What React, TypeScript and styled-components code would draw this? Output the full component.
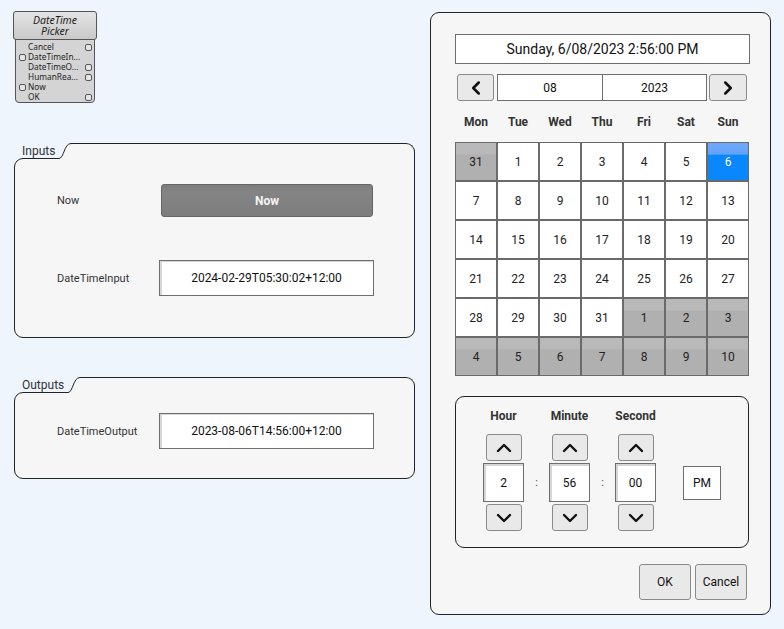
import React from "react";
import styled, { createGlobalStyle } from "styled-components";
import { ChevronLeft, ChevronRight, ChevronUp, ChevronDown } from "lucide-react";

const GlobalStyle = createGlobalStyle`
  html, body { margin: 0; padding: 0; background: #eef5fd; }
  body { font-family: Roboto, "Liberation Sans", sans-serif; }
  * { box-sizing: border-box; }
`;

const Page = styled.div`
  display: flex;
  align-items: flex-start;
  width: 784px;
  height: 629px;
  background: #eef5fd;
  overflow: hidden;
`;

const LeftCol = styled.div`
  width: 430px;
  display: flex;
  flex-direction: column;
  padding-top: 11px;
`;

/* ---------- node widget ---------- */
const Node = styled.div`
  margin-left: 13px;
  width: 84px;
  display: flex;
  flex-direction: column;
  font-family: "Noto Sans", "DejaVu Sans", sans-serif;
  color: #1e1e1e;
`;

const NodeHeader = styled.div`
  height: 29px;
  border: 1px solid #555;
  border-radius: 3px;
  background: linear-gradient(#e4e4e4, #c9c9c9);
  display: flex;
  justify-content: center;
  align-items: center;
  position: relative;
  z-index: 1;
`;

const NodeTitle = styled.span`
  width: 56px;
  text-align: center;
  font-style: italic;
  font-size: 10.5px;
  line-height: 11px;
`;

const NodeBody = styled.div`
  margin: -1px 2px 0 2px;
  border: 1px solid #555;
  border-radius: 0 0 4px 4px;
  background: #d4d4d4;
  padding: 2px 0 0 0;
`;

const PortRow = styled.div`
  display: grid;
  grid-template-columns: 12px 1fr 9px;
  align-items: center;
  height: 10px;
  font-size: 8.3px;
  line-height: 10px;
  white-space: nowrap;
`;

const Port = styled.span<{ $side: "l" | "r" }>`
  display: block;
  width: 7px;
  height: 7px;
  border: 1px solid #555;
  border-radius: 2px;
  background: #e6e6e6;
  margin-left: ${(p) => (p.$side === "l" ? "3px" : "0")};
`;

/* ---------- tabbed panels ---------- */
const PanelWrap = styled.div<{ $top: number }>`
  margin-left: 14px;
  margin-top: ${(p) => p.$top}px;
  width: 401px;
  display: flex;
  flex-direction: column;
`;

const TabRow = styled.div`
  display: flex;
  height: 15px;
  align-items: stretch;
`;

const TabLabel = styled.span`
  flex: none;
  padding: 0 4px 0 8px;
  font-size: 12px;
  line-height: 16px;
  color: #333;
`;

const TabCurve = styled.svg`
  flex: none;
  width: 12px;
  height: 16px;
  position: relative;
  z-index: 1;
`;

const TabFill = styled.div`
  flex: 1;
  height: 16px;
  background: #f6f6f6;
  border-top: 1px solid #222;
  border-right: 1px solid #222;
  border-top-right-radius: 9px;
  position: relative;
  z-index: 1;
`;

const PanelBody = styled.div<{ $h: number; $pt: number }>`
  height: ${(p) => p.$h}px;
  background: #f6f6f6;
  border: 1px solid #222;
  border-radius: 9px 0 9px 9px;
  padding-top: ${(p) => p.$pt}px;
  display: flex;
  flex-direction: column;
  gap: 43px;
`;

const FieldRow = styled.div`
  display: flex;
  align-items: center;
`;

const FieldLabel = styled.span`
  width: 144px;
  padding-left: 42px;
  font-size: 11px;
  color: #333;
`;

const NowButton = styled.div`
  margin-left: 2px;
  width: 212px;
  height: 33px;
  border: 1px solid #666;
  border-radius: 3px;
  background: linear-gradient(#7c7c7c 0%, #848484 20%, #7d7d7d 100%);
  color: #f4f4f4;
  font-weight: bold;
  font-size: 12px;
  display: flex;
  align-items: center;
  justify-content: center;
`;

const TextBox = styled.div<{ $w: number; $h: number; $fs?: number }>`
  width: ${(p) => p.$w}px;
  height: ${(p) => p.$h}px;
  background: #fff;
  border: 1px solid #6e6e6e;
  box-shadow: inset 2px 1px 0 #d6d6d6;
  font-size: ${(p) => p.$fs ?? 12}px;
  color: #111;
  display: flex;
  align-items: center;
  justify-content: center;
`;

/* ---------- calendar ---------- */
const RightPanel = styled.div`
  margin-top: 12px;
  width: 341px;
  height: 603px;
  border: 1px solid #222;
  border-radius: 9px;
  background: #f6f6f6;
  padding: 21px 0 0 24px;
  display: flex;
  flex-direction: column;
`;

const DateDisplay = styled.div`
  width: 295px;
  height: 30px;
  background: #fff;
  border: 1px solid #6e6e6e;
  font-size: 14px;
  color: #111;
  display: flex;
  align-items: center;
  justify-content: center;
`;

const NavRow = styled.div`
  margin: 10px 0 0 2px;
  display: flex;
  height: 27px;
`;

const GrayButton = styled.div<{ $w: number; $h: number }>`
  width: ${(p) => p.$w}px;
  height: ${(p) => p.$h}px;
  background: #e9e9e9;
  border: 1px solid #8a8a8a;
  border-radius: 3px;
  color: #111;
  font-size: 12px;
  display: flex;
  align-items: center;
  justify-content: center;
`;

const NavBox = styled.div<{ $w: number; $ml: number }>`
  width: ${(p) => p.$w}px;
  margin-left: ${(p) => p.$ml}px;
  background: #fff;
  border: 1px solid #6e6e6e;
  font-size: 12px;
  color: #111;
  display: flex;
  align-items: center;
  justify-content: center;
`;

const DayHeaders = styled.div`
  margin-top: 14px;
  display: grid;
  grid-template-columns: repeat(7, 42px);
  height: 14px;
  font-size: 12px;
  font-weight: bold;
  color: #333;
  text-align: center;
  line-height: 14px;
`;

const DayGrid = styled.div`
  margin-top: 13px;
  width: 294px;
  display: grid;
  grid-template-columns: repeat(7, 40px);
  grid-auto-rows: 37px;
  gap: 2px;
  padding: 1px;
  background: #6a6a6a;
`;

type Kind = "cur" | "other" | "sel";

const DayCell = styled.div<{ $kind: Kind }>`
  display: flex;
  align-items: center;
  justify-content: center;
  font-size: 12px;
  color: ${(p) => (p.$kind === "sel" ? "#fff" : "#222")};
  background: ${(p) =>
    p.$kind === "cur"
      ? "#fff"
      : p.$kind === "other"
      ? "linear-gradient(#b9b9b9 0%, #b9b9b9 28%, #b0b0b0 34%, #b0b0b0 100%)"
      : "linear-gradient(#6fa8fb 0%, #64a2fc 30%, #0a87fd 33%, #0a87fd 100%)"};
`;

const TimePanel = styled.div`
  margin-top: 20px;
  width: 294px;
  height: 152px;
  border: 1px solid #222;
  border-radius: 9px;
  padding: 12px 0 0 27px;
`;

const TimeGrid = styled.div`
  display: grid;
  grid-template-columns: 41px 25px 41px 25px 41px 27px 38px;
  grid-template-rows: 23px 27px 39px 27px;
  row-gap: 2px;
  justify-items: center;
`;

const TimeHead = styled.div<{ $col: number }>`
  grid-column: ${(p) => p.$col};
  grid-row: 1;
  align-self: start;
  white-space: nowrap;
  font-size: 12px;
  font-weight: bold;
  color: #333;
  line-height: 14px;
`;

const Spin = styled(GrayButton)<{ $col: number; $row: number }>`
  grid-column: ${(p) => p.$col};
  grid-row: ${(p) => p.$row};
`;

const TimeValue = styled(TextBox)<{ $col: number }>`
  grid-column: ${(p) => p.$col};
  grid-row: 3;
  box-shadow: inset 2px 2px 0 #d6d6d6;
`;

const Colon = styled.div<{ $col: number }>`
  grid-column: ${(p) => p.$col};
  grid-row: 3;
  align-self: center;
  font-size: 11px;
  color: #444;
`;

const AmPm = styled.div`
  grid-column: 7;
  grid-row: 3;
  align-self: center;
  width: 38px;
  height: 34px;
  background: #fff;
  border: 1px solid #6e6e6e;
  font-size: 12px;
  color: #111;
  display: flex;
  align-items: center;
  justify-content: center;
`;

const ActionRow = styled.div`
  margin-top: 16px;
  width: 294px;
  padding-right: 2px;
  display: flex;
  justify-content: flex-end;
  gap: 4px;
`;

const Panel: React.FC<{
  title: string;
  top: number;
  h: number;
  pt: number;
  children: React.ReactNode;
}> = ({ title, top, h, pt, children }) => (
  <PanelWrap $top={top}>
    <TabRow>
      <TabLabel>{title}</TabLabel>
      <TabCurve viewBox="0 0 12 16">
        <path d="M0 16 L0 15.5 C5 15.5 5 0.5 12 0.5 L12 16 Z" fill="#f6f6f6" />
        <path d="M0 15.5 C5 15.5 5 0.5 12 0.5" fill="none" stroke="#222" strokeWidth="1" />
      </TabCurve>
      <TabFill />
    </TabRow>
    <PanelBody $h={h} $pt={pt}>
      {children}
    </PanelBody>
  </PanelWrap>
);

const ports: { name: string; side: "l" | "r" }[] = [
  { name: "Cancel", side: "r" },
  { name: "DateTimeIn...", side: "l" },
  { name: "DateTimeO...", side: "r" },
  { name: "HumanRea...", side: "r" },
  { name: "Now", side: "l" },
  { name: "OK", side: "r" },
];

const days: { d: number; k: Kind }[] = [
  { d: 31, k: "other" },
  ...[1, 2, 3, 4, 5].map((d) => ({ d, k: "cur" as Kind })),
  { d: 6, k: "sel" },
  ...Array.from({ length: 25 }, (_, i) => ({ d: i + 7, k: "cur" as Kind })),
  ...Array.from({ length: 10 }, (_, i) => ({ d: i + 1, k: "other" as Kind })),
];

const dayNames = ["Mon", "Tue", "Wed", "Thu", "Fri", "Sat", "Sun"];

const timeCols = [
  { label: "Hour", value: "2", col: 1 },
  { label: "Minute", value: "56", col: 3 },
  { label: "Second", value: "00", col: 5 },
];

export default function App() {
  return (
    <Page>
      <GlobalStyle />
      <LeftCol>
        <Node>
          <NodeHeader>
            <NodeTitle>DateTime Picker</NodeTitle>
          </NodeHeader>
          <NodeBody>
            {ports.map((p) => (
              <PortRow key={p.name}>
                {p.side === "l" ? <Port $side="l" /> : <span />}
                <span>{p.name}</span>
                {p.side === "r" ? <Port $side="r" /> : <span />}
              </PortRow>
            ))}
          </NodeBody>
        </Node>

        <Panel title="Inputs" top={40} h={180} pt={25}>
          <FieldRow>
            <FieldLabel>Now</FieldLabel>
            <NowButton>Now</NowButton>
          </FieldRow>
          <FieldRow>
            <FieldLabel>DateTimeInput</FieldLabel>
            <TextBox $w={215} $h={36}>2024-02-29T05:30:02+12:00</TextBox>
          </FieldRow>
        </Panel>

        <Panel title="Outputs" top={39} h={87} pt={20}>
          <FieldRow>
            <FieldLabel>DateTimeOutput</FieldLabel>
            <TextBox $w={215} $h={36}>2023-08-06T14:56:00+12:00</TextBox>
          </FieldRow>
        </Panel>
      </LeftCol>

      <RightPanel>
        <DateDisplay>Sunday, 6/08/2023 2:56:00 PM</DateDisplay>
        <NavRow>
          <GrayButton $w={37} $h={27}>
            <ChevronLeft size={22} strokeWidth={2.8} />
          </GrayButton>
          <NavBox $w={106} $ml={3}>08</NavBox>
          <NavBox $w={105} $ml={-1}>2023</NavBox>
          <GrayButton $w={38} $h={27} style={{ marginLeft: 2 }}>
            <ChevronRight size={22} strokeWidth={2.8} />
          </GrayButton>
        </NavRow>
        <DayHeaders>
          {dayNames.map((n) => (
            <span key={n}>{n}</span>
          ))}
        </DayHeaders>
        <DayGrid>
          {days.map((c, i) => (
            <DayCell key={i} $kind={c.k}>
              {c.d}
            </DayCell>
          ))}
        </DayGrid>

        <TimePanel>
          <TimeGrid>
            {timeCols.map((t) => (
              <React.Fragment key={t.label}>
                <TimeHead $col={t.col}>{t.label}</TimeHead>
                <Spin $w={36} $h={27} $col={t.col} $row={2}>
                  <ChevronUp size={24} strokeWidth={2.4} />
                </Spin>
                <TimeValue $w={41} $h={39} $col={t.col}>
                  {t.value}
                </TimeValue>
                <Spin $w={36} $h={27} $col={t.col} $row={4}>
                  <ChevronDown size={24} strokeWidth={2.4} />
                </Spin>
              </React.Fragment>
            ))}
            <Colon $col={2}>:</Colon>
            <Colon $col={4}>:</Colon>
            <AmPm>PM</AmPm>
          </TimeGrid>
        </TimePanel>

        <ActionRow>
          <GrayButton $w={52} $h={36}>OK</GrayButton>
          <GrayButton $w={52} $h={36}>Cancel</GrayButton>
        </ActionRow>
      </RightPanel>
    </Page>
  );
}
